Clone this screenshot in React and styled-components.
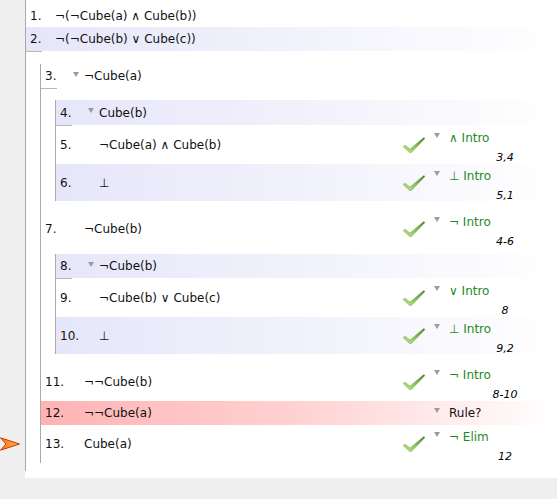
import styled, { createGlobalStyle } from "styled-components";

const Global = createGlobalStyle`
  html, body {
    margin: 0;
    padding: 0;
    background: #efefef;
  }
  body {
    font-family: "DejaVu Sans", Verdana, sans-serif;
    font-size: 12px;
    color: #111;
  }
`;

const Page = styled.div`
  position: relative;
  display: flex;
  width: 557px;
  height: 499px;
  background: #efefef;
  overflow: hidden;
`;

const Gutter = styled.div`
  width: 25px;
  flex-shrink: 0;
`;

const Panel = styled.div`
  width: 532px;
  align-self: flex-start;
  background: #ffffff;
  padding-bottom: 7px;
`;

const Bar = styled.div`
  border-left: 1px solid #a9a9a9;
  margin-left: ${(p) => p.$indent || 0}px;
  margin-top: ${(p) => p.$mt || 0}px;
  margin-bottom: ${(p) => p.$mb || 0}px;
  padding-top: ${(p) => p.$pt || 0}px;
  padding-bottom: ${(p) => p.$pb || 0}px;
`;

const FitchLine = styled.div`
  width: 16px;
  height: 1px;
  background: #b8b8b8;
`;

const backgrounds = {
  band: "linear-gradient(to right, #e6e6fa 0%, #f3f3fc 55%, #ffffff 100%)",
  error: "linear-gradient(to right, #ffb3b3 0%, #ffd2d2 50%, #ffffff 100%)",
  none: "transparent",
};

const Row = styled.div`
  display: flex;
  align-items: center;
  height: ${(p) => p.$h}px;
  background: ${(p) => backgrounds[p.$bg || "none"]};
`;

const Num = styled.div`
  width: ${(p) => (p.$premise ? 29 : 32)}px;
  padding-left: 4px;
  box-sizing: border-box;
  flex-shrink: 0;
`;

const Toggle = styled.div`
  width: 11px;
  flex-shrink: 0;
  align-self: center;
  display: flex;
  margin-top: -4px;
`;

const Tri = styled.span`
  display: inline-block;
  width: 0;
  height: 0;
  border-left: 3.5px solid transparent;
  border-right: 3.5px solid transparent;
  border-top: 5px solid #9c9c9c;
`;

const Formula = styled.div`
  flex: 1;
  white-space: nowrap;
`;

const Just = styled.div`
  width: 157px;
  flex-shrink: 0;
  align-self: stretch;
  display: flex;
  align-items: center;
`;

const CheckSlot = styled.div`
  width: 22px;
  height: 16px;
  margin-left: 3px;
  flex-shrink: 0;
`;

const RuleCol = styled.div`
  align-self: flex-start;
  padding-top: 5px;
  margin-left: 9px;
  display: flex;
  flex-direction: column;
`;

const RuleLine = styled.div`
  display: flex;
  align-items: flex-start;
  height: 14px;
  line-height: 14px;
`;

const RuleTri = styled(Tri)`
  margin-top: 2px;
  margin-right: 9px;
`;

const RuleName = styled.span`
  color: ${(p) => (p.$pending ? "#111" : "#1e8a1e")};
`;

const Refs = styled.div`
  width: 60px;
  margin-left: 41px;
  margin-top: 6px;
  text-align: center;
  font-size: 11px;
  font-style: italic;
  line-height: 13px;
  color: #000;
`;

const Arrow = styled.svg`
  position: absolute;
  left: 0;
  top: 437px;
`;

function Check() {
  return (
    <svg width="22" height="16" viewBox="0 0 22 16">
      <defs>
        <linearGradient id="ck" x1="0" y1="1" x2="1" y2="0">
          <stop offset="0" stopColor="#c2e68e" />
          <stop offset="0.45" stopColor="#8cc657" />
          <stop offset="1" stopColor="#3d7a26" />
        </linearGradient>
      </defs>
      <polygon
        points="0,9.5 2.2,8.2 7,12 20.8,0.4 22,1.4 8.2,15.8 6.8,15.8"
        fill="url(#ck)"
        stroke="#6da544"
        strokeWidth="0.4"
      />
    </svg>
  );
}

function Line({ n, f, h = 38, bg, assume, premise, rule, refs, ok }) {
  return (
    <Row $h={h} $bg={bg}>
      <Num $premise={premise}>{n}.</Num>
      {!premise && <Toggle>{assume && <Tri />}</Toggle>}
      <Formula>{f}</Formula>
      {rule && (
        <Just>
          <CheckSlot>{ok && <Check />}</CheckSlot>
          <RuleCol>
            <RuleLine>
              <RuleTri />
              <RuleName $pending={!ok}>{rule}</RuleName>
            </RuleLine>
            {refs && <Refs>{refs}</Refs>}
          </RuleCol>
        </Just>
      )}
    </Row>
  );
}

export default function App() {
  return (
    <Page>
      <Global />
      <Gutter />
      <Panel>
        <Bar $pt={4} $pb={8}>
          <Line premise n={1} h={23} f="¬(¬Cube(a) ∧ Cube(b))" />
          <Line premise n={2} h={24} bg="band" f="¬(¬Cube(b) ∨ Cube(c))" />
          <FitchLine />

          <Bar $indent={14} $mt={12}>
            <Line assume n={3} h={24} f="¬Cube(a)" />
            <FitchLine />

            <Bar $indent={14} $mt={11} $mb={9}>
              <Line assume n={4} h={25} bg="band" f="Cube(b)" />
              <FitchLine />
              <Line n={5} f="¬Cube(a) ∧ Cube(b)" rule="∧ Intro" refs="3,4" ok />
              <Line n={6} h={37} bg="band" f="⊥" rule="⊥ Intro" refs="5,1" ok />
            </Bar>

            <Line n={7} f="¬Cube(b)" rule="¬ Intro" refs="4-6" ok />

            <Bar $indent={14} $mt={6} $mb={9}>
              <Line assume n={8} h={24} bg="band" f="¬Cube(b)" />
              <FitchLine />
              <Line n={9} f="¬Cube(b) ∨ Cube(c)" rule="∨ Intro" refs="8" ok />
              <Line n={10} h={37} bg="band" f="⊥" rule="⊥ Intro" refs="9,2" ok />
            </Bar>

            <Line n={11} f="¬¬Cube(b)" rule="¬ Intro" refs="8-10" ok />
            <Line n={12} h={24} bg="error" f="¬¬Cube(a)" rule="Rule?" />
            <Line n={13} f="Cube(a)" rule="¬ Elim" refs="12" ok />
          </Bar>
        </Bar>
      </Panel>

      <Arrow width="20" height="14" viewBox="0 0 20 14">
        <defs>
          <linearGradient id="ar" x1="0" y1="0" x2="1" y2="0">
            <stop offset="0" stopColor="#ff7a1a" />
            <stop offset="1" stopColor="#ffb040" />
          </linearGradient>
        </defs>
        <path d="M0.5 0.8 L19.5 7 L0.5 13.2 L6 7 Z" fill="url(#ar)" stroke="#c8360a" strokeWidth="1" strokeLinejoin="round" />
      </Arrow>
    </Page>
  );
}
